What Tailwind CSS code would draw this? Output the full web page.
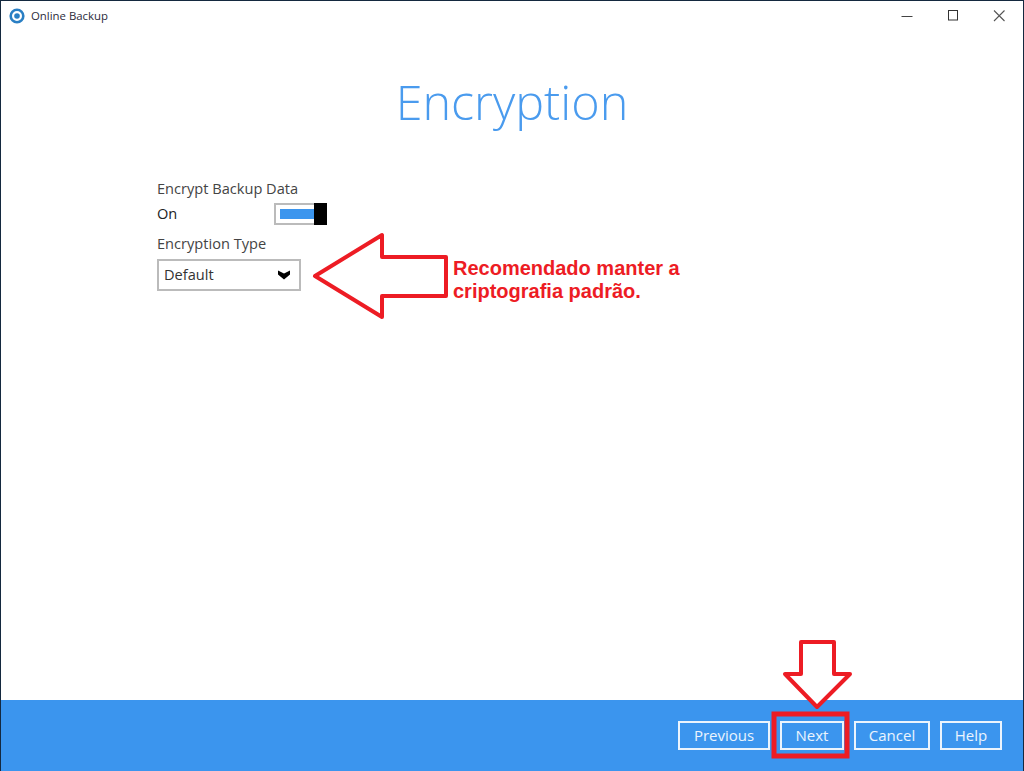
<!DOCTYPE html>
<html lang="en">
<head>
  <meta charset="UTF-8" />
  <title>Online Backup</title>
  <script src="https://cdn.jsdelivr.net/npm/@tailwindcss/browser@4"></script>
</head>
<body class="m-0 bg-white">
  <div class="relative w-[1024px] h-[771px] overflow-hidden flex flex-col border border-b-0 border-[#14293f] bg-white font-['Open_Sans',sans-serif]">

    <!-- TITLE BAR -->
    <div class="flex items-center justify-between h-[30px] pl-2 shrink-0">
      <div class="flex items-center gap-[6px]">
        <svg class="w-4 h-4" viewBox="0 0 16 16">
          <circle cx="8" cy="8" r="6.3" fill="none" stroke="#2a7fc4" stroke-width="2.6"/>
          <circle cx="8" cy="8" r="2.8" fill="#2a7fc4"/>
        </svg>
        <span class="text-[11.4px] text-[#2c2c3c]">Online Backup</span>
      </div>
      <div class="flex items-center pr-[1px]">
        <svg class="w-[46px] h-[30px]" viewBox="0 0 46 30"><path d="M17.5 15.500h11" stroke="#444" stroke-width="1"/></svg>
        <svg class="w-[46px] h-[30px]" viewBox="0 0 46 30"><rect x="18.500" y="9.500" width="9" height="9.500" fill="none" stroke="#333" stroke-width="1"/></svg>
        <svg class="w-[46px] h-[30px]" viewBox="0 0 46 30"><path d="M18 9.500l10.500 10.500M28.500 9.500L18 20" stroke="#555" stroke-width="1.100"/></svg>
      </div>
    </div>

    <!-- CONTENT -->
    <div class="flex-1 flex flex-col">
      <h1 class="text-center text-[48.5px] leading-[60px] mt-[40px] font-light text-[#4a9bee]">Encryption</h1>
      <div class="ml-[156px] mt-[47px] w-[170px]">
        <p class="text-[14.6px] leading-[20px] text-[#444]">Encrypt Backup Data</p>
        <div class="flex items-center justify-between h-[22px] mt-[5px]">
          <span class="text-[14.6px] text-[#222]">On</span>
          <div class="flex items-center w-[53px] h-[22px] border-2 border-[#bbb] pl-1 relative">
            <div class="w-[36px] h-[10px] bg-[#3b95ee]"></div>
            <div class="absolute right-[-2px] top-[-2px] w-[13px] h-[22px] bg-black"></div>
          </div>
        </div>
        <p class="text-[14.6px] leading-[20px] mt-[8px] text-[#444]">Encryption Type</p>
        <div class="flex items-center justify-between w-[144px] h-[32px] mt-[6px] border-2 border-[#bbb] pl-[5px] pr-2 text-[14.6px] text-[#333]">
          <span>Default</span>
          <svg class="w-[14px] h-[10px]" viewBox="0 0 14 10"><path d="M1 .5L7 3.500L13 .5V4.500L7 9.500L1 4.500Z" fill="#000"/></svg>
        </div>
      </div>
    </div>

    <!-- FOOTER -->
    <div class="flex items-center justify-end gap-[10px] h-[71px] pr-[21px] shrink-0 bg-[#3b95ee] text-[15px] text-white/90">
      <button class="w-[92px] h-[29px] border-2 border-white/90 leading-none">Previous</button>
      <button class="w-[64px] h-[29px] border-2 border-white/90 leading-none">Next</button>
      <button class="w-[76px] h-[29px] border-2 border-white/90 leading-none">Cancel</button>
      <button class="w-[62px] h-[29px] border-2 border-white/90 leading-none">Help</button>
    </div>

    <!-- ANNOTATIONS -->
    <svg class="absolute left-[-1px] top-[-1px] pointer-events-none" width="1024" height="771" viewBox="0 0 1024 771">
      <path d="M315 276L382 235V257H446V296H382V317Z" fill="#fff" stroke="#ed1c24" stroke-width="4" stroke-linejoin="round"/>
      <path d="M801 642H834V674H850L817 707L785 674H801Z" fill="#fff" stroke="#ed1c24" stroke-width="4" stroke-linejoin="round"/>
      <rect x="774" y="714" width="73" height="42" fill="none" stroke="#ed1c24" stroke-width="5"/>
    </svg>
    <p class="absolute left-[452px] top-[256px] text-[20px] leading-[23px] font-bold text-[#ed1c24] font-['Liberation_Sans',sans-serif]">Recomendado manter a<br>criptografia padrão.</p>
  </div>
</body>
</html>
